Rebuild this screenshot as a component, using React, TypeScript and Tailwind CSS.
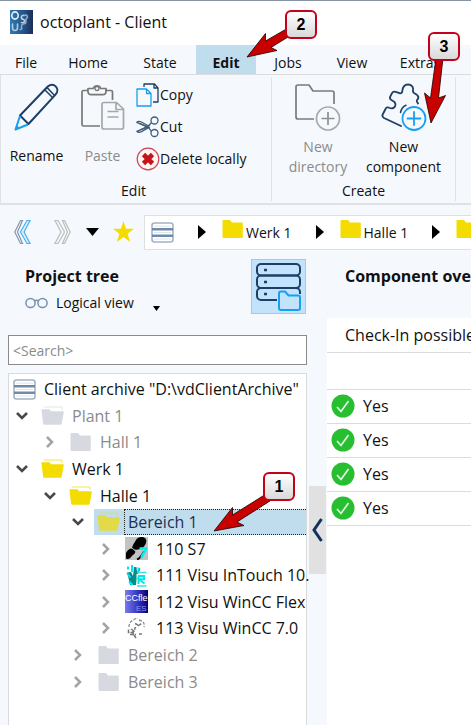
import React from "react";

const NAVY = "#1d3f66";
const BLUE = "#179ff0";

function LogoIcon() {
  return (
    <svg width="23" height="24" viewBox="0 0 23 24" fill="none" aria-hidden="true">
      <defs>
        <linearGradient id="logo" x1="0" x2="1">
          <stop offset="0" stopColor="#2f7ab2" />
          <stop offset="0.6" stopColor="#245488" />
          <stop offset="1" stopColor="#1b2c58" />
        </linearGradient>
      </defs>
      <rect width="23" height="24" fill="url(#logo)" />
      <g strokeWidth="1.6" strokeLinecap="round" strokeLinejoin="round">
        <ellipse cx="5" cy="5.500" rx="3.200" ry="3.600" stroke="#e6eef6" />
        <path d="M2.500 14v3.500c0 4 5 4 5 0V14" stroke="#b4cbe0" />
        <path d="M14 5.500c-3-.8-3.500 3-1 3.800 2.800.9 1.500 4.200-1.500 3.200" stroke="#bdd0e2" />
        <path d="M14.500 5.500c2.500-1.500 4 1.500 2 3s1 4-1.500 5-3.500 0-3.500 2.500 1 3.500-1.500 3.500" stroke="#8eabc9" />
      </g>
    </svg>
  );
}

function PencilIcon() {
  return (
    <svg width="46" height="48" viewBox="0 0 46 48" fill="none" strokeWidth="2" strokeLinejoin="round" aria-hidden="true">
      <path d="M6 32.500 33.500 3.800c2.500-2.600 6-2.600 8.200-.4s2.300 5.600-.2 8.200L14.500 41Z" stroke={NAVY} />
      <path d="m33 4.500 7.500 8M30.500 6.500l8 8" stroke={NAVY} strokeWidth="1.500" />
      <path d="M6 33 1.500 46.500 14 41.500" stroke={BLUE} />
      <path d="m1.500 46.500 4-1.500-2.600-3Z" fill={BLUE} />
    </svg>
  );
}

function PasteIcon() {
  return (
    <svg width="46" height="48" viewBox="0 0 46 48" fill="none" strokeWidth="1.700" strokeLinejoin="round" aria-hidden="true">
      <path d="M8 7.500H3.500a1.500 1.500 0 0 0-1.500 1.500v32.500A1.500 1.500 0 0 0 3.500 43H20M25 7.500h6a1.500 1.500 0 0 1 1.500 1.500v8" stroke="#777" />
      <path d="M8 5.500h5.200a4 4 0 0 1 7.600 0H26v3.200a3 3 0 0 1-3 3H11a3 3 0 0 1-3-3Z" stroke="#777" />
      <circle cx="17" cy="5.500" r="2" stroke="#777" strokeWidth="1.300" />
      <path d="M24 19.500h12.500l7 6.500v18a2 2 0 0 1-2 2H24a2 2 0 0 1-2-2V21.500a2 2 0 0 1 2-2ZM36 20v6.500h7" stroke="#a7a7a7" />
      <path d="M27.500 28.500h11M27.500 34h11" stroke="#a7a7a7" />
    </svg>
  );
}

function CopyIcon() {
  return (
    <svg width="24" height="24" viewBox="0 0 24 24" fill="none" strokeWidth="1.300" strokeLinejoin="round" aria-hidden="true">
      <path d="M8 4V1h10.500L22 5v14h-5M18 1v4h4" stroke={NAVY} />
      <path d="M1 6h9.500L15 10.500V23H1ZM10.500 6v4.500H15" stroke={BLUE} />
    </svg>
  );
}

function CutIcon() {
  return (
    <svg width="24" height="22" viewBox="0 0 24 22" fill="none" stroke="#3f5c7d" strokeWidth="1.300" strokeLinejoin="round" aria-hidden="true">
      <circle cx="18.500" cy="4.500" r="3.500" />
      <circle cx="18.500" cy="17" r="3.500" />
      <path d="M15.500 6.500 12.500 10 5.500 6C3.500 5 1.800 5.300.8 6.300l10.500 4.500L.8 15.300c1 1 2.700 1.300 4.700.3l7-4 3 3.700" />
      <path d="M4 7.700 14 12M4 14l10-4.500" />
    </svg>
  );
}

function DeleteIcon() {
  return (
    <svg width="24" height="24" viewBox="0 0 24 24" aria-hidden="true">
      <circle cx="12" cy="12" r="10.800" fill="#fff5f5" stroke="#d2434b" strokeWidth="1.200" />
      <path d="m7.500 7.500 9 9M16.500 7.500l-9 9" stroke="#c4141c" strokeWidth="4.600" />
    </svg>
  );
}

function NewDirectoryIcon() {
  return (
    <svg width="46" height="48" viewBox="0 0 46 48" fill="none" strokeWidth="1.700" strokeLinejoin="round" aria-hidden="true">
      <path d="M19 36H3a2 2 0 0 1-2-2V4a2 2 0 0 1 2-2h11l4 6h19a2 2 0 0 1 2 2v11" stroke="#7b7b7b" />
      <circle cx="33" cy="35.500" r="11.500" stroke="#a9a9a9" />
      <path d="M26.500 35.500h13M33 29v13" stroke="#8f8f8f" />
    </svg>
  );
}

function NewComponentIcon() {
  return (
    <svg width="46" height="48" viewBox="0 0 46 48" fill="none" strokeWidth="1.800" strokeLinejoin="round" strokeLinecap="round" aria-hidden="true">
      <path
        d="M20 43 3 35c-1.500-.8-2-2-1.300-3.500L4.500 26c.8-1.700 2.200-2 3.700-1.200 3.300 1.600 6.300-.3 6.300-3.300s-2.300-3.500-4.200-4.500c-1.500-.9-1.700-2-1-3.500l1.700-3.300c.8-1.600 2-2 3.800-1.300l3.700 1.300c1.700.5 2.600-.2 2.800-2C21.600 4.500 23.500 1.500 27 1.500s5.500 2.500 5 5.500c-.4 2 .2 2.800 1.800 3.500 2.500 1.200 4 2.200 3.500 4.500-.3 1.500-1.500 1.300-1.500 3 0 1 .7 1.500 1.200 2.500"
        stroke={NAVY}
      />
      <path d="M19.500 29.500c.7-3.500 2.500-6 5.500-7.300" stroke={NAVY} strokeWidth="1.500" />
      <circle cx="33" cy="35.500" r="11.500" stroke={BLUE} />
      <path d="M26.500 35.500h13M33 29v13" stroke={BLUE} />
    </svg>
  );
}

function ArchiveIcon() {
  return (
    <svg width="23" height="21" viewBox="0 0 23 21" aria-hidden="true">
      <rect x="1" y="1" width="21" height="19" rx="2.500" fill="#fff" stroke="#a3b3c4" strokeWidth="1.600" />
      <path d="M1 7.300h21M1 13.700h21" stroke="#6f8ba8" strokeWidth="2.600" />
      <path d="M3 4.200h17M3 10.500h17M3 17h17" stroke="#dfe6ee" strokeWidth="1" />
    </svg>
  );
}

function ClosedFolder({ color }: { color: string }) {
  return (
    <svg width="23" height="20" viewBox="0 0 23 20" aria-hidden="true">
      <path d="M1.500 2a1 1 0 0 1 1-1h6.500l2 2.500h10a.8.800 0 0 1 .8.800V18a1 1 0 0 1-1 1h-18.300a1 1 0 0 1-1-1Z" fill={color} />
    </svg>
  );
}

function OpenFolder({ color }: { color: string }) {
  return (
    <svg width="23" height="20" viewBox="0 0 23 20" aria-hidden="true">
      <path d="M2.500 1h18.500v3" fill="none" stroke={color} strokeWidth="1" opacity="0.700" />
      <path d="M.5 4.500a1 1 0 0 1 1-1.300h7l1.500 2h12a.8.800 0 0 1 .8 1l-2.200 11.800a1 1 0 0 1-1 .8H3.200a1 1 0 0 1-1-.8Z" fill={color} />
    </svg>
  );
}

function S7Icon() {
  return (
    <svg width="23" height="23" viewBox="0 0 23 23" aria-hidden="true">
      <rect width="23" height="23" fill="#c3c3c3" />
      <path d="M11 3c1-2.500 4-3 7-3 3 1 4 3 3 6-1 3-3 5-6 6-3 1-6 1-8-.5 0-3 2-5 4-8.500Z" fill="#000" />
      <path d="M1 16c1.500-3 4-5 6.500-4.500 2.500.5 3.500 2.500 2.500 4.500-1 1.500-2.500 2-3.500 3.500-1 2-4 3-5.500 2Z" fill="#000" />
      <path d="m6.500 10.500 4.500 4" stroke="#c3c3c3" strokeWidth="1" />
      <path d="M12 22.500c3-1 5-4 7-8" stroke="#000" strokeWidth="2" fill="none" />
      <path d="M14.500 11.500h6.500c-.5 3.500-3.500 4.500-4.500 9.500" stroke="#00f0f0" strokeWidth="2.600" fill="none" />
    </svg>
  );
}

function InTouchIcon() {
  return (
    <svg width="23" height="23" viewBox="0 0 23 23" aria-hidden="true">
      <path d="M2 8.500 6 8l2 4 1-9h2.500l.5 5 2.500-4 1 1-2.500 5-2 11H5L3.500 14Z" fill="#078c8c" />
      <path d="M3 2.500v3M7 1v7M13.500 3.500v4M2 9l3.500 4.500M4 17.500l3.500 3.500" stroke="#00e6ea" strokeWidth="2" />
      <path d="M12 8.500h9.500M12 22h9.500" stroke="#3edfe4" strokeWidth="1.300" />
      <path d="M11.500 10h10v11h-10z" fill="#fff" />
      <path d="M13.500 11.500V20M13 12h6v3.200h-5l5.500 4.300" stroke="#00e6ea" strokeWidth="2" fill="none" />
    </svg>
  );
}

function FlexIcon() {
  return (
    <svg width="23" height="23" viewBox="0 0 23 23" aria-hidden="true">
      <defs>
        <linearGradient id="flex" x1="0" x2="1">
          <stop offset="0" stopColor="#7a7af0" />
          <stop offset="0.500" stopColor="#3c3cc4" />
          <stop offset="1" stopColor="#00007c" />
        </linearGradient>
      </defs>
      <rect width="23" height="23" fill="url(#flex)" />
      <text x="0" y="11" fontSize="9" fontFamily="Liberation Sans, sans-serif" fill="#fff">CCfle</text>
      <text x="11" y="21" fontSize="8" fontFamily="Liberation Sans, sans-serif" fill="#8f96f0">ES</text>
    </svg>
  );
}

function WinCCIcon() {
  return (
    <svg width="23" height="23" viewBox="0 0 23 23" fill="none" aria-hidden="true">
      <path d="M4 10c0-5 4-8.500 9-8.500M14 3c4 1 6 3 5 7" stroke="#8a8a8a" strokeWidth="1.300" strokeDasharray="3 1.500" />
      <path d="M10 6.500 13 8M13 9l4-3M3.500 12.500v3H9M6 12l3 2 1.500-4M5 17.500h6M8 14v4M9 18l2 3M14 17h3" stroke="#777" strokeWidth="1.500" strokeDasharray="4 1" />
    </svg>
  );
}

function Chevron({ open }: { open: boolean }) {
  return open ? (
    <svg width="14" height="10" viewBox="0 0 14 10" fill="none" aria-hidden="true">
      <path d="m2 2 5 5 5-5" stroke="#484848" strokeWidth="2.500" />
    </svg>
  ) : (
    <svg width="10" height="14" viewBox="0 0 10 14" fill="none" aria-hidden="true">
      <path d="m2 2 5 5-5 5" stroke="#a3a3a3" strokeWidth="2.500" />
    </svg>
  );
}

function PathArrow() {
  return (
    <svg width="8" height="14" viewBox="0 0 8 14" className="shrink-0" aria-hidden="true">
      <path d="M0 0v14l8-7Z" fill="#000" />
    </svg>
  );
}

function PathLink({ href, label, children }: { href: string; label?: string; children?: React.ReactNode }) {
  return (
    <a href={href} aria-label={label} className="mr-6 ml-[15px] flex shrink-0 items-center gap-0.5 pt-0.5">
      <span className="pb-2">
        <ClosedFolder color="#f4dc00" />
      </span>
      {children}
    </a>
  );
}

function CheckIcon() {
  return (
    <svg width="24" height="24" viewBox="0 0 24 24" fill="none" className="shrink-0" aria-hidden="true">
      <circle cx="12" cy="12" r="11.500" fill="#27be31" />
      <path d="m6 13 4 4.500L17.500 7" stroke="#e4f8e4" strokeWidth="1.700" />
    </svg>
  );
}

function ServerIcon() {
  return (
    <svg width="48" height="50" viewBox="0 0 48 50" fill="none" strokeWidth="2" aria-hidden="true">
      <rect x="2" y="2" width="43" height="11.500" rx="4" stroke={NAVY} />
      <rect x="2" y="13.500" width="43" height="12.500" rx="4" stroke={NAVY} />
      <path d="M22 38H6a4 4 0 0 1-4-4v-4a4 4 0 0 1 4-4h35a4 4 0 0 1 4 4v2" stroke={NAVY} />
      <path d="M9 8h3M9 20h3M9 32h3" stroke={NAVY} strokeWidth="2.500" />
      <path d="M24 31.500a2 2 0 0 1 2-2h4l3.500 4H43a2 2 0 0 1 2 2V46a2 2 0 0 1-2 2H26a2 2 0 0 1-2-2Z" fill="#c3e2fb" stroke={BLUE} />
    </svg>
  );
}

const tabs = [
  { name: "File", width: "w-[52px]" },
  { name: "Home", width: "w-[72px]" },
  { name: "State", width: "w-[72px]" },
  { name: "Edit", width: "w-[60px]" },
  { name: "Jobs", width: "w-[64px]" },
  { name: "View", width: "w-[64px]" },
  { name: "Extras", width: "w-[72px]" },
];

function LargeCommand({ icon, label, disabled, className }: { icon: React.ReactNode; label: string; disabled?: boolean; className: string }) {
  return (
    <button type="button" disabled={disabled} className={`flex flex-col items-center leading-5 disabled:text-[#8b8b8b] ${className}`}>
      {icon}
      <span>{label}</span>
    </button>
  );
}

function SmallCommand({ icon, label }: { icon: React.ReactNode; label: string }) {
  return (
    <button type="button" className="flex h-8 items-center whitespace-nowrap">
      {icon}
      {label}
    </button>
  );
}

type Node = {
  level: 1 | 2 | 3 | 4;
  label: string;
  open?: boolean;
  muted?: boolean;
  selected?: boolean;
  icon?: React.ReactNode;
};

const nodes: Node[] = [
  { level: 1, label: "Plant 1", open: true, muted: true },
  { level: 2, label: "Hall 1", muted: true },
  { level: 1, label: "Werk 1", open: true },
  { level: 2, label: "Halle 1", open: true },
  { level: 3, label: "Bereich 1", open: true, selected: true },
  { level: 4, label: "110 S7", icon: <S7Icon /> },
  { level: 4, label: "111 Visu InTouch 10.", icon: <InTouchIcon /> },
  { level: 4, label: "112 Visu WinCC Flex", icon: <FlexIcon /> },
  { level: 4, label: "113 Visu WinCC 7.0", icon: <WinCCIcon /> },
  { level: 3, label: "Bereich 2", muted: true },
  { level: 3, label: "Bereich 3", muted: true },
];

const indent = { 1: "pl-0", 2: "pl-7", 3: "pl-14", 4: "pl-21" };

function TreeRow({ node }: { node: Node }) {
  const color = node.muted ? "#d6dae0" : node.selected ? "#e2da46" : "#f4dc00";
  const icon = node.icon ?? (node.open ? <OpenFolder color={color} /> : <ClosedFolder color={color} />);
  return (
    <li role="treeitem" aria-expanded={!!node.open} aria-selected={!!node.selected} className={`flex min-h-0 flex-1 ${indent[node.level]}`}>
      <button type="button" aria-label={`Toggle ${node.label}`} className="flex w-[29px] shrink-0 items-center justify-center pr-[3px]">
        <Chevron open={!!node.open} />
      </button>
      <div className={`flex min-w-0 flex-1 items-stretch gap-1 pl-[3px] ${node.selected ? "bg-[#c0dded]" : ""}`}>
        <span className="flex shrink-0 items-center">{icon}</span>
        <span
          className={`flex min-w-0 flex-1 items-center border border-r-0 border-dotted pl-[3px] whitespace-nowrap ${
            node.selected ? "border-[#222] text-[#1c2f55]" : "border-transparent"
          } ${node.muted ? "text-[#8b8b8b]" : ""}`}
        >
          {node.label}
        </span>
      </div>
    </li>
  );
}

function Callout({ n, className }: { n: number; className: string }) {
  return (
    <span
      className={`absolute flex h-[29px] w-8 items-center justify-center rounded-md border-2 border-[#c4001a] bg-linear-to-b from-white to-[#d9d9d9] font-['Liberation_Sans',Arial,sans-serif] text-base font-bold text-black ${className}`}
    >
      {n}
    </span>
  );
}

function Arrows() {
  return (
    <svg width="471" height="560" viewBox="0 0 471 560" className="pointer-events-none absolute top-0 left-0" fill="#c80000" stroke="#1a0000" strokeWidth="0.800" aria-hidden="true">
      <path d="m247 56 18.500-23.500V40L288 27v9l-17 10.500 6 3Z" />
      <path d="m431 122-6.500-30 6 5L436 57h7l-4.500 40 7-2.500Z" />
      <path d="m214 530 18.500-23.500V514L266 493l4 7-33 21 7 3.500Z" />
    </svg>
  );
}

export default function App() {
  return (
    <div className="relative flex min-h-screen flex-col overflow-hidden border-t border-[#8794a1] bg-[#f5f8fd] font-['Open_Sans','Noto_Sans',sans-serif] text-sm text-[#111]">
      <header className="flex h-11 shrink-0 items-center gap-[7px] bg-white pb-0.5 pl-2.5">
        <LogoIcon />
        <h1 className="text-base leading-6">octoplant - Client</h1>
      </header>

      <nav aria-label="Ribbon tabs" className="flex h-[30px] shrink-0 border-b border-[#dcdcdc]">
        {tabs.map((t) => (
          <button
            key={t.name}
            type="button"
            className={`shrink-0 pt-1.5 ${t.width} ${t.name === "Edit" ? "bg-[#c0dded] font-bold" : ""}`}
          >
            {t.name}
          </button>
        ))}
      </nav>

      <section aria-label="Ribbon" className="flex h-[130px] shrink-0 overflow-hidden border-b-2 border-l border-[#dfe1e3]">
        <div className="my-0.5 flex w-[271px] shrink-0 flex-col border-r border-[#dfe3e8]">
          <div className="flex h-[105px]">
            <LargeCommand icon={<PencilIcon />} label="Rename" className="w-[71px] gap-[15px] pt-1.5" />
            <LargeCommand icon={<PasteIcon />} label="Paste" disabled className="w-[61px] gap-[15px] pt-1.5" />
            <div className="flex flex-col pt-0.5 pl-[3px]">
              <SmallCommand icon={<CopyIcon />} label="Copy" />
              <SmallCommand icon={<CutIcon />} label="Cut" />
              <SmallCommand icon={<DeleteIcon />} label="Delete locally" />
            </div>
          </div>
          <div className="w-[265px] text-center leading-5">Edit</div>
        </div>
        <div className="my-0.5 flex w-[184px] shrink-0 flex-col border-r border-[#dfe3e8]">
          <div className="flex h-[105px] pl-[11px]">
            <LargeCommand icon={<NewDirectoryIcon />} label="New directory" disabled className="w-[70px] gap-1.5 pt-1.5" />
            <LargeCommand icon={<NewComponentIcon />} label="New component" className="w-[101px] gap-1.5 pt-1.5" />
          </div>
          <div className="text-center leading-5">Create</div>
        </div>
      </section>

      <div className="flex h-[46px] shrink-0 items-center pt-2">
        <button type="button" aria-label="Back" className="ml-3.5">
          <svg width="17" height="26" viewBox="0 0 17 26" fill="none" strokeWidth="1.200" aria-hidden="true">
            <path d="M8.500 1.500h-2L.8 13l5.700 11.500h2L3.500 13Z" stroke="#8196ab" />
            <path d="M16 1.500h-3L6.500 13 13 24.500h3L10 13Z" stroke="#45b0ef" fill="#dff2ff" />
          </svg>
        </button>
        <button type="button" aria-label="Forward" className="ml-[23px]">
          <svg width="17" height="26" viewBox="0 0 17 26" fill="none" strokeWidth="1.200" stroke="#bcbcbc" aria-hidden="true">
            <path d="M8.500 1.500h2L16.200 13l-5.700 11.500h-2L13.500 13Z" />
            <path d="M1 1.500h3L10.500 13 4 24.500H1L7 13Z" />
          </svg>
        </button>
        <button type="button" aria-label="History" className="ml-[15px]">
          <svg width="13" height="8" viewBox="0 0 13 8" aria-hidden="true">
            <path d="M0 0h13L6.500 8Z" />
          </svg>
        </button>
        <button type="button" aria-label="Favourites" className="ml-3.5">
          <svg width="21" height="22" viewBox="0 0 21 22" aria-hidden="true">
            <path d="m10.500 0 2.600 7.800H21l-6.300 5 2.400 8.200-6.600-5-6.600 5 2.400-8.200L0 7.800h7.900Z" fill="#f4dc00" />
          </svg>
        </button>
        <div className="ml-2.5 flex h-[35px] min-w-0 flex-1 items-center overflow-hidden border border-r-0 border-[#e0e0e0] bg-white pl-1.5">
          <span className="mr-6 shrink-0">
            <ArchiveIcon />
          </span>
          <PathArrow />
          <PathLink href="#werk">Werk 1</PathLink>
          <PathArrow />
          <PathLink href="#halle">Halle 1</PathLink>
          <PathArrow />
          <PathLink href="#bereich" label="Bereich 1" />
        </div>
      </div>

      <div className="flex min-h-0 flex-1">
        <aside className="flex w-[307px] shrink-0 flex-col pl-2">
          <div className="flex h-[84px] justify-between pt-2 pr-px pl-[17px]">
            <div className="flex flex-col pt-[7px]">
              <h2 className="text-base leading-5 font-bold">Project tree</h2>
              <div className="relative flex items-center pt-[7px]">
                <svg width="23" height="12" viewBox="0 0 23 12" fill="none" stroke="#7891ab" strokeWidth="1.500" aria-hidden="true">
                  <circle cx="5.500" cy="6" r="4.600" />
                  <circle cx="17.500" cy="6" r="4.600" />
                  <path d="M9 4c1.500-1 3.500-1 5 0" />
                </svg>
                <select aria-label="View mode" className="w-[112px] appearance-none bg-transparent pl-2 leading-5">
                  <option>Logical view</option>
                </select>
                <svg width="7" height="5" viewBox="0 0 7 5" className="pointer-events-none absolute right-0 bottom-0.5" aria-hidden="true">
                  <path d="M0 0h7L3.500 5Z" />
                </svg>
              </div>
            </div>
            <button type="button" aria-label="Show directories" className="flex h-[55px] w-[55px] items-center justify-center border border-[#93cdfb] bg-[#c3e2fb]">
              <ServerIcon />
            </button>
          </div>
          <input type="text" aria-label="Search" placeholder="<Search>" className="h-[30px] w-full border border-[#8b8b8b] bg-white px-1 placeholder:text-[#8b8b8b]" />
          <div className="mt-2 flex-1 border border-b-0 border-[#dadada] bg-white pt-0.5 text-base">
            <ul role="tree" aria-label="Project tree" className="flex h-[319px] flex-col">
              <li role="treeitem" aria-selected="false" className="flex min-h-0 flex-1 items-center gap-2 pl-1 whitespace-nowrap">
                <ArchiveIcon />
                Client archive "D:\vdClientArchive"
              </li>
              {nodes.map((n) => (
                <TreeRow key={n.label} node={n} />
              ))}
            </ul>
          </div>
        </aside>

        <div className="flex w-5 shrink-0 flex-col justify-center pt-[84px]">
          <button type="button" aria-label="Collapse project tree" className="mx-auto flex h-[88px] w-[17px] items-center justify-center bg-[#e1e1e1]">
            <svg width="12" height="24" viewBox="0 0 12 24" fill="none" aria-hidden="true">
              <path d="M10.500 1 3 12l7.500 11" stroke="#12305a" strokeWidth="3" />
            </svg>
          </button>
        </div>

        <main className="flex min-w-0 flex-1 flex-col overflow-hidden whitespace-nowrap">
          <h2 className="h-[67px] shrink-0 pt-[15px] pl-[18px] text-base leading-5 font-bold">Component overview</h2>
          <div className="flex-1 bg-white">
            <table className="w-full border-collapse text-left text-base">
              <thead>
                <tr className="h-[34px] border-b border-[#dcdcdc]">
                  <th className="p-0 pl-[18px] font-normal">Check-In possible</th>
                </tr>
              </thead>
              <tbody>
                <tr className="h-[37px] border-b border-[#dcdcdc]">
                  <td />
                </tr>
                {[1, 2, 3, 4].map((r) => (
                  <tr key={r} className="h-[34px] border-b border-[#dcdcdc]">
                    <td className="p-0 pl-1">
                      <span className="flex items-center gap-2">
                        <CheckIcon />
                        Yes
                      </span>
                    </td>
                  </tr>
                ))}
              </tbody>
            </table>
          </div>
        </main>
      </div>

      <Arrows />
      <Callout n={1} className="top-[471px] left-[263px]" />
      <Callout n={2} className="top-[9px] left-[285px]" />
      <Callout n={3} className="top-[31px] left-[428px]" />
    </div>
  );
}
